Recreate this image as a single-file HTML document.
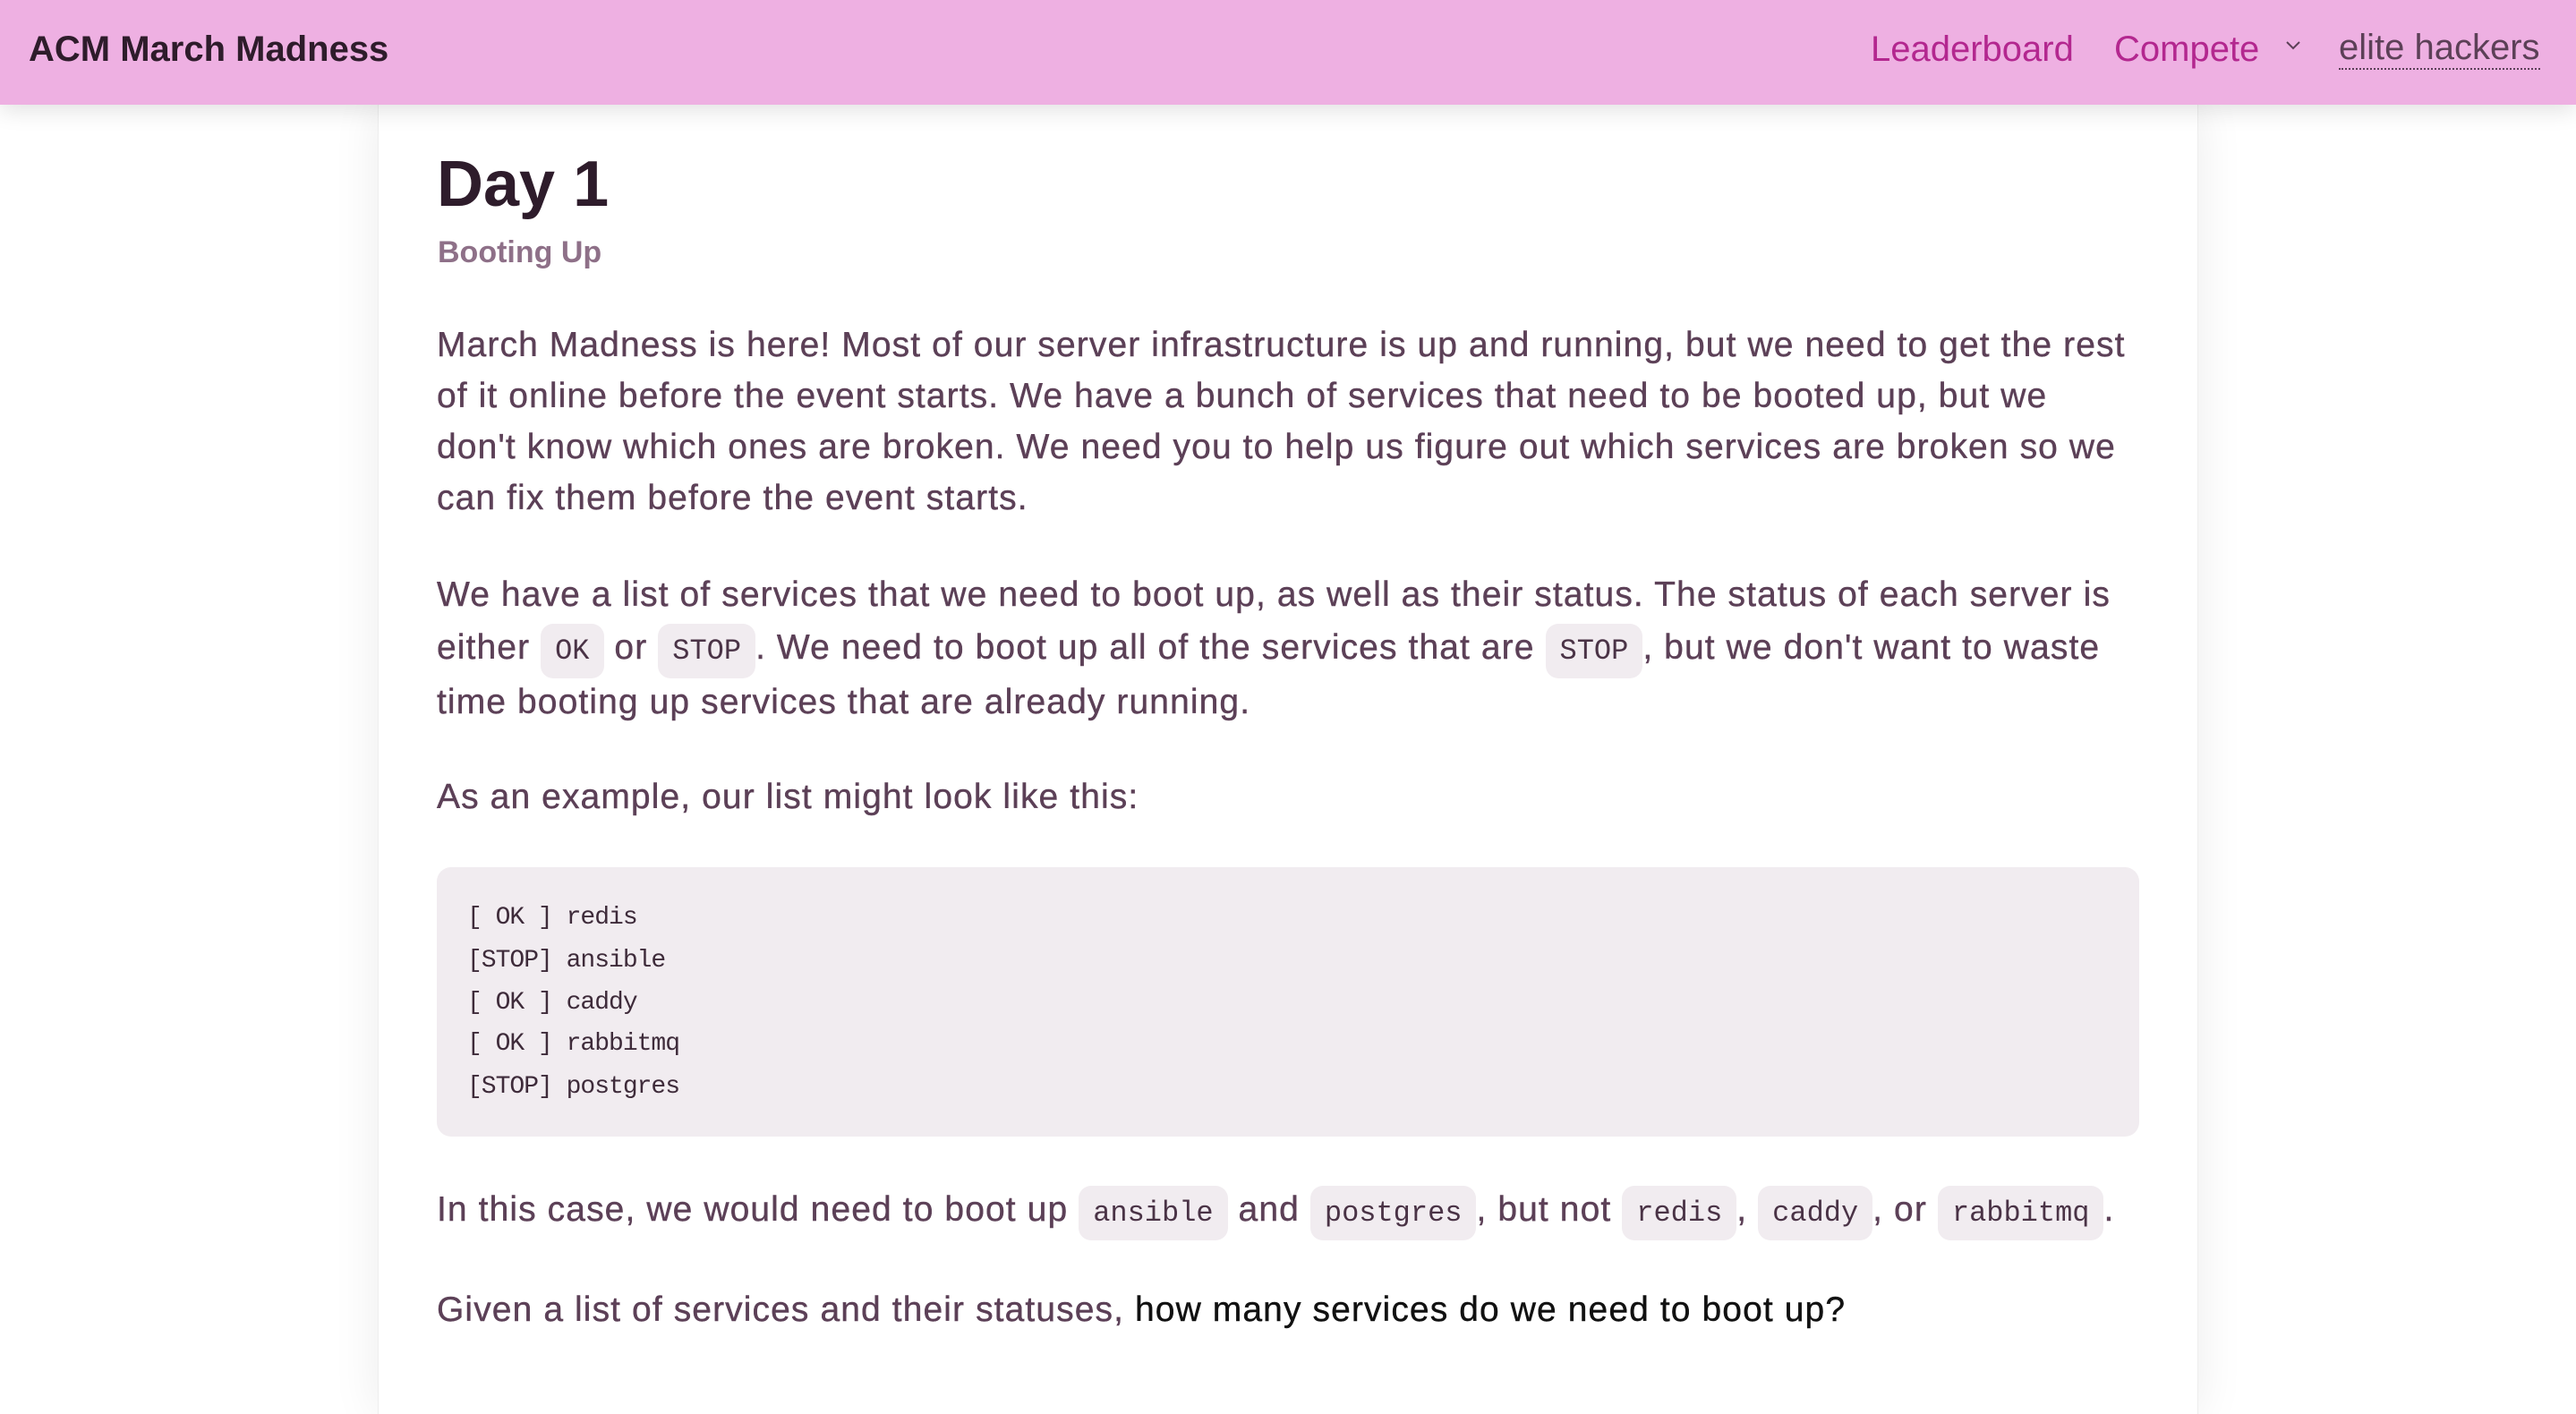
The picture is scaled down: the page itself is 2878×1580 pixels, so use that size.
<!DOCTYPE html>
<html><head><meta charset="utf-8">
<style>
*{margin:0;padding:0;box-sizing:border-box}
html,body{width:2878px;height:1580px;overflow:hidden;background:#fff;font-family:"Liberation Sans",sans-serif}
.nav{position:absolute;left:0;top:0;width:2878px;height:117px;background:#eeb0e2;box-shadow:0 6px 24px rgba(0,0,0,.12);z-index:2}
.brand{position:absolute;left:32px;top:30px;font-size:40px;font-weight:bold;color:#2e1c2b;line-height:50px}
.nl{position:absolute;top:30px;font-size:40px;line-height:50px;color:#b3278f}
.card{position:absolute;left:422px;top:117px;width:2034px;height:1463px;background:#fff;box-shadow:0 0 50px rgba(0,0,0,.08);border-left:1px solid #eee;border-right:1px solid #eee}
.l{position:absolute;left:488px;white-space:nowrap;font-size:39px;letter-spacing:1.1px;color:#5c4057;line-height:57px;-webkit-text-stroke:0.4px #5c4057}
code{font-family:"Liberation Mono",monospace;font-size:32px;letter-spacing:0;background:#f1ecf0;border-radius:14px;padding:12px 16px;color:#4a3346;-webkit-text-stroke:0}
.pre{position:absolute;left:488px;top:969px;width:1902px;height:301px;background:#f1ecf0;border-radius:16px}
.pl{position:absolute;left:522px;font-family:"Liberation Mono",monospace;font-size:28px;color:#3e2b3a;line-height:40px;white-space:pre;letter-spacing:-1px}
</style></head><body>
<div class="nav">
<div class="brand">ACM March Madness</div>
<div class="nl" style="left:2090px">Leaderboard</div>
<div class="nl" style="left:2362px">Compete</div>
<svg style="position:absolute;left:2552px;top:44px" width="20" height="14" viewBox="0 0 20 14"><path d="M3 3 L10 10 L17 3" fill="none" stroke="#5c4057" stroke-width="2"/></svg>
<div class="nl" style="left:2613px;color:#5c4057;border-bottom:2px dotted #5c4057;line-height:46px">elite hackers</div>
</div>
<div class="card"></div>
<div style="position:absolute;left:488px;top:166px;font-size:72px;font-weight:bold;color:#2e1c2b;line-height:80px">Day 1</div>
<div style="position:absolute;left:489px;top:262px;font-size:34px;font-weight:bold;color:#8e7088;line-height:40px">Booting Up</div>

<div class="l" style="top:357px">March Madness is here! Most of our server infrastructure is up and running, but we need to get the rest</div>
<div class="l" style="top:414px">of it online before the event starts. We have a bunch of services that need to be booted up, but we</div>
<div class="l" style="top:471px">don't know which ones are broken. We need you to help us figure out which services are broken so we</div>
<div class="l" style="top:528px">can fix them before the event starts.</div>

<div class="l" style="top:636px">We have a list of services that we need to boot up, as well as their status. The status of each server is</div>
<div class="l" style="top:695px">either <code>OK</code> or <code>STOP</code>. We need to boot up all of the services that are <code>STOP</code>, but we don't want to waste</div>
<div class="l" style="top:756px">time booting up services that are already running.</div>

<div class="l" style="top:862px">As an example, our list might look like this:</div>

<div class="pre"></div>
<div class="pl" style="top:1006px">[ OK ] redis</div>
<div class="pl" style="top:1054px">[STOP] ansible</div>
<div class="pl" style="top:1101px">[ OK ] caddy</div>
<div class="pl" style="top:1147px">[ OK ] rabbitmq</div>
<div class="pl" style="top:1195px">[STOP] postgres</div>

<div class="l" style="top:1323px">In this case, we would need to boot up <code>ansible</code> and <code>postgres</code>, but not <code>redis</code>, <code>caddy</code>, or <code>rabbitmq</code>.</div>
<div class="l" style="top:1435px">Given a list of services and their statuses, <span style="color:#111;-webkit-text-stroke:0.4px #111">how many services do we need to boot up?</span></div>
</body></html>
